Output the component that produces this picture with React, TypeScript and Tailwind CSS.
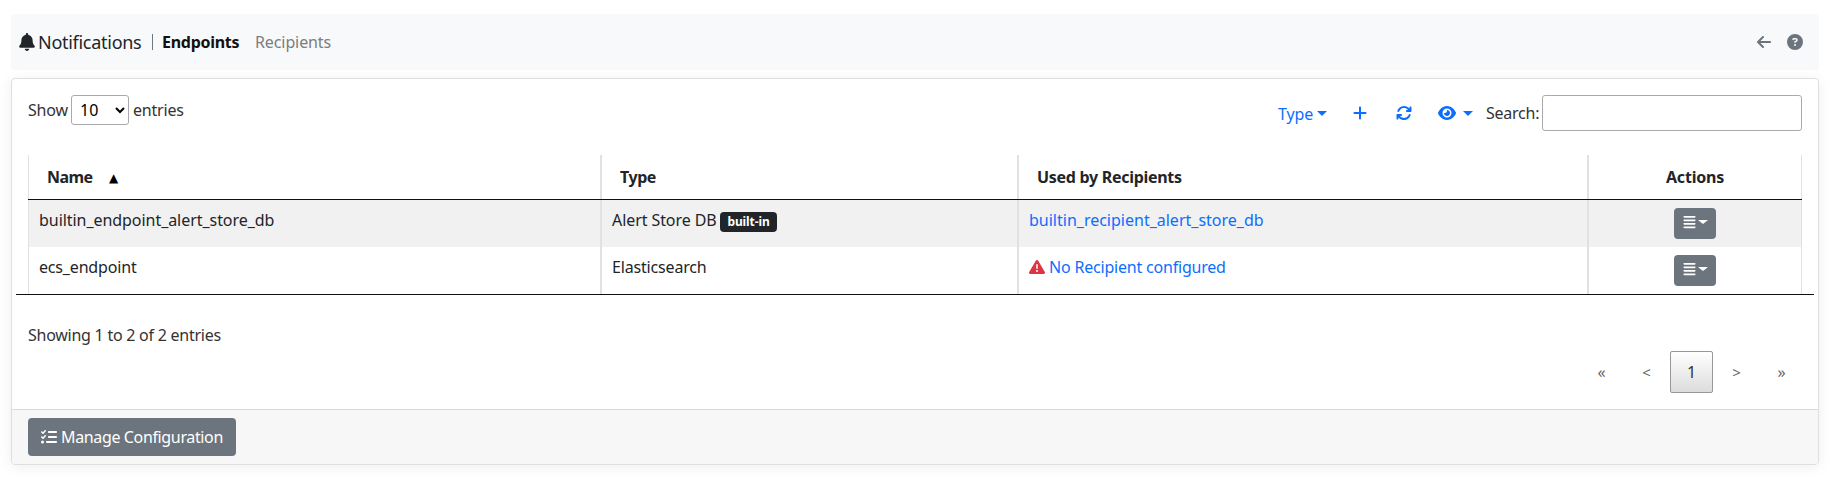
import type { ReactNode } from "react";
import {
  FaAlignJustify,
  FaArrowLeft,
  FaArrowsRotate,
  FaBell,
  FaCircleQuestion,
  FaEye,
  FaListCheck,
  FaPlus,
  FaTriangleExclamation,
} from "react-icons/fa6";

function Caret({ className }: { className: string }) {
  return (
    <span
      className={`inline-block h-0 w-0 border-x-[5px] border-x-transparent border-t-current ${className}`}
    />
  );
}

function ActionsButton() {
  return (
    <button className="mt-2 flex h-[31px] w-[42px] rounded-[4px] bg-[#6c757d] pt-[7px] pl-[9px] text-white">
      <FaAlignJustify className="h-[14px] w-[13px]" />
      <Caret className="mt-[5px] ml-[2px] border-t-[4px]" />
    </button>
  );
}

function Row({ striped, cells }: { striped?: boolean; cells: ReactNode[] }) {
  return (
    <div
      className={`grid h-[47px] grid-cols-[573px_417px_570px_214px] ${
        striped ? "bg-[#f1f1f1]" : ""
      }`}
    >
      {cells.map((cell, i) => (
        <div
          key={i}
          className={`border-x border-[#dee2e6] ${
            i === 3 ? "flex justify-center" : "pt-[8px] pl-[10px]"
          }`}
        >
          {cell}
        </div>
      ))}
    </div>
  );
}

export default function App() {
  return (
    <div className="h-[478px] w-[1829px] overflow-hidden bg-white pt-[14px] pr-[10px] pl-[11px] font-['Noto_Sans',sans-serif] text-[16px] leading-6 text-[#212529]">
      <nav className="flex h-14 items-center rounded-[4px] bg-[#f8f9fb] pr-[16px] pl-[8px]">
        <FaBell className="h-[18px] w-[16px]" />
        <span className="ml-[3px] w-[104px] text-[18px] tracking-[-0.28px] whitespace-nowrap">
          Notifications
        </span>
        <span className="ml-[10px] h-[16px] w-px bg-[#6b7885]" />
        <span className="ml-[9px] w-[77px] font-bold tracking-[-0.28px] text-[#111]">
          Endpoints
        </span>
        <span className="ml-[16px] tracking-[-0.1px] text-[#7c7d7e]">Recipients</span>
        <FaArrowLeft className="ml-auto h-[16px] w-[14px] text-[#6c757d]" />
        <FaCircleQuestion className="ml-[16px] size-[16px] text-[#6c757d]" />
      </nav>

      <main className="mt-2 flex h-[387px] flex-col rounded-[4px] border border-[#dfdfdf] shadow-[0_2px_14px_rgba(0,0,0,0.07)]">
        <div className="flex items-start justify-between px-4 pt-4 text-[#333]">
          <label className="flex h-[30px] items-center">
            <span className="w-[43px] tracking-[-0.2px]">Show</span>
            <select className="h-[30px] w-[58px] rounded-[3px] border border-[#aaa] bg-transparent px-[4px] pt-[2px] pb-[5px] text-black">
              <option>10</option>
            </select>
            <span className="ml-1 tracking-[-0.2px]">entries</span>
          </label>
          <div className="flex h-9 items-center">
            <button className="flex items-center text-[#0d6efd]">
              <span className="w-[35px] pt-px tracking-[-0.1px]">Type</span>
              <Caret className="ml-[4px] border-t-[5px]" />
            </button>
            <FaPlus className="ml-[26px] h-[16px] w-[14px] text-[#0d6efd]" />
            <FaArrowsRotate className="ml-[29px] size-[16px] text-[#0d6efd]" />
            <button className="ml-[26px] flex items-center text-[#0d6efd]">
              <FaEye className="h-[16px] w-[18px]" />
              <Caret className="ml-[7px] border-t-[5px]" />
            </button>
            <label className="ml-[13px] flex items-center">
              <span className="w-[56px] tracking-[-0.25px]">Search:</span>
              <input className="h-9 w-[260px] rounded-[3px] border border-[#aaa] px-1" />
            </label>
          </div>
        </div>

        <div className="mx-1 mt-6 border-b border-[#111] pr-[12px] pl-[12px]">
          <div className="grid h-[45px] grid-cols-[573px_417px_570px_214px] border-b border-[#111] font-bold">
            <div className="border-x border-[#dee2e6] pt-[10px] pl-[18px]">
              <div className="flex">
                <span className="w-[62px] tracking-[-0.55px]">Name</span>
                <span className="pt-px font-['DejaVu_Sans'] text-[12px] font-normal text-black">
                  ▲
                </span>
              </div>
            </div>
            <div className="border-x border-[#dee2e6] pt-[10px] pl-[18px] tracking-[-0.45px]">
              Type
            </div>
            <div className="border-x border-[#dee2e6] pt-[10px] pl-[18px] tracking-[-0.29px]">
              Used by Recipients
            </div>
            <div className="border-x border-[#dee2e6] pt-[10px] text-center tracking-[-0.2px]">
              Actions
            </div>
          </div>
          <Row
            striped
            cells={[
              <span className="tracking-[-0.05px]">builtin_endpoint_alert_store_db</span>,
              <span className="flex">
                <span className="w-[105px] tracking-[-0.08px] whitespace-nowrap">
                  Alert Store DB
                </span>
                <span className="mt-1 ml-[3px] flex h-5 w-[57px] items-center justify-center rounded-[4px] bg-[#212529] text-[12px] font-bold tracking-[-0.1px] text-white">
                  built-in
                </span>
              </span>,
              <a className="text-[#0d6efd]">builtin_recipient_alert_store_db</a>,
              <ActionsButton />,
            ]}
          />
          <Row
            cells={[
              <span className="tracking-[-0.17px]">ecs_endpoint</span>,
              <span className="tracking-[-0.17px]">Elasticsearch</span>,
              <span className="flex items-center">
                <FaTriangleExclamation className="size-[16px] text-[#dc3545]" />
                <a className="ml-[4px] tracking-[-0.2px] text-[#0d6efd]">
                  No Recipient configured
                </a>
              </span>,
              <ActionsButton />,
            ]}
          />
        </div>

        <div className="px-4 pt-[28px] tracking-[-0.25px] text-[#333]">
          Showing 1 to 2 of 2 entries
        </div>
        <div className="mt-[4px] flex justify-end gap-[2px] px-[15px] text-[#666]">
          <span className="flex h-[42px] w-[43px] items-center justify-center">«</span>
          <span className="flex h-[42px] w-[43px] items-center justify-center text-[15px]">&lt;</span>
          <span className="flex h-[42px] w-[43px] items-center justify-center rounded-[2px] border border-[#979797] bg-linear-to-b from-white to-[#dcdcdc] text-[#333]">
            1
          </span>
          <span className="flex h-[42px] w-[43px] items-center justify-center text-[15px]">&gt;</span>
          <span className="flex h-[42px] w-[43px] items-center justify-center">»</span>
        </div>

        <footer className="mt-auto h-[55px] rounded-b-[3px] border-t border-[#dadada] bg-[#f7f7f7] px-4 pt-2">
          <button className="flex h-[38px] w-[208px] items-center rounded-[4px] bg-[#6c757d] pl-[13px] text-white">
            <FaListCheck className="size-[16px]" />
            <span className="ml-[4px] tracking-[-0.36px] whitespace-nowrap">
              Manage Configuration
            </span>
          </button>
        </footer>
      </main>
    </div>
  );
}
